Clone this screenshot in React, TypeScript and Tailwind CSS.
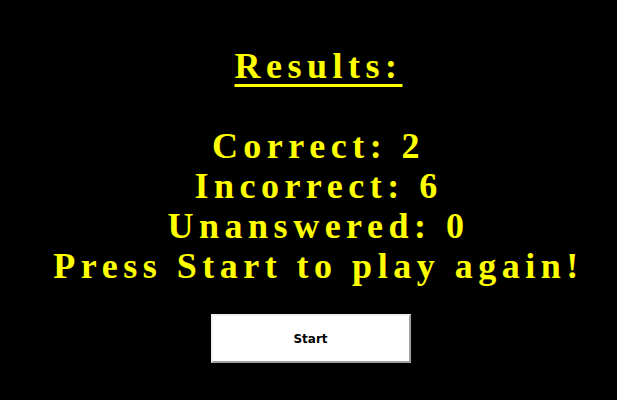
export default function App() {
  return (
    <div className="min-h-screen bg-black text-center text-[#ffff00] pt-[46px]" style={{ fontFamily: '"Liberation Serif", "DejaVu Serif", serif' }}>
      <div className="pl-[20px]">
        <h2 className="text-[36px] leading-[40px] font-bold tracking-[5.5px] underline decoration-[3px] underline-offset-[6px]">Results:</h2>
        <div className="mt-[40px] text-[36px] leading-[40px] font-bold tracking-[5.5px]">
          <p>Correct: 2</p>
          <p>Incorrect: 6</p>
          <p>Unanswered: 0</p>
          <p>Press Start to play again!</p>
        </div>
      </div>
      <button className="mt-[28px] ml-[4px] w-[200px] h-[49px] bg-white border-2 border-t-[#f0f0f0] border-l-[#f0f0f0] border-r-[#a0a0a0] border-b-[#a0a0a0] text-black text-[12px] font-bold tracking-normal" style={{ fontFamily: '"DejaVu Sans", Verdana, sans-serif' }}>
        Start
      </button>
    </div>
  );
}
